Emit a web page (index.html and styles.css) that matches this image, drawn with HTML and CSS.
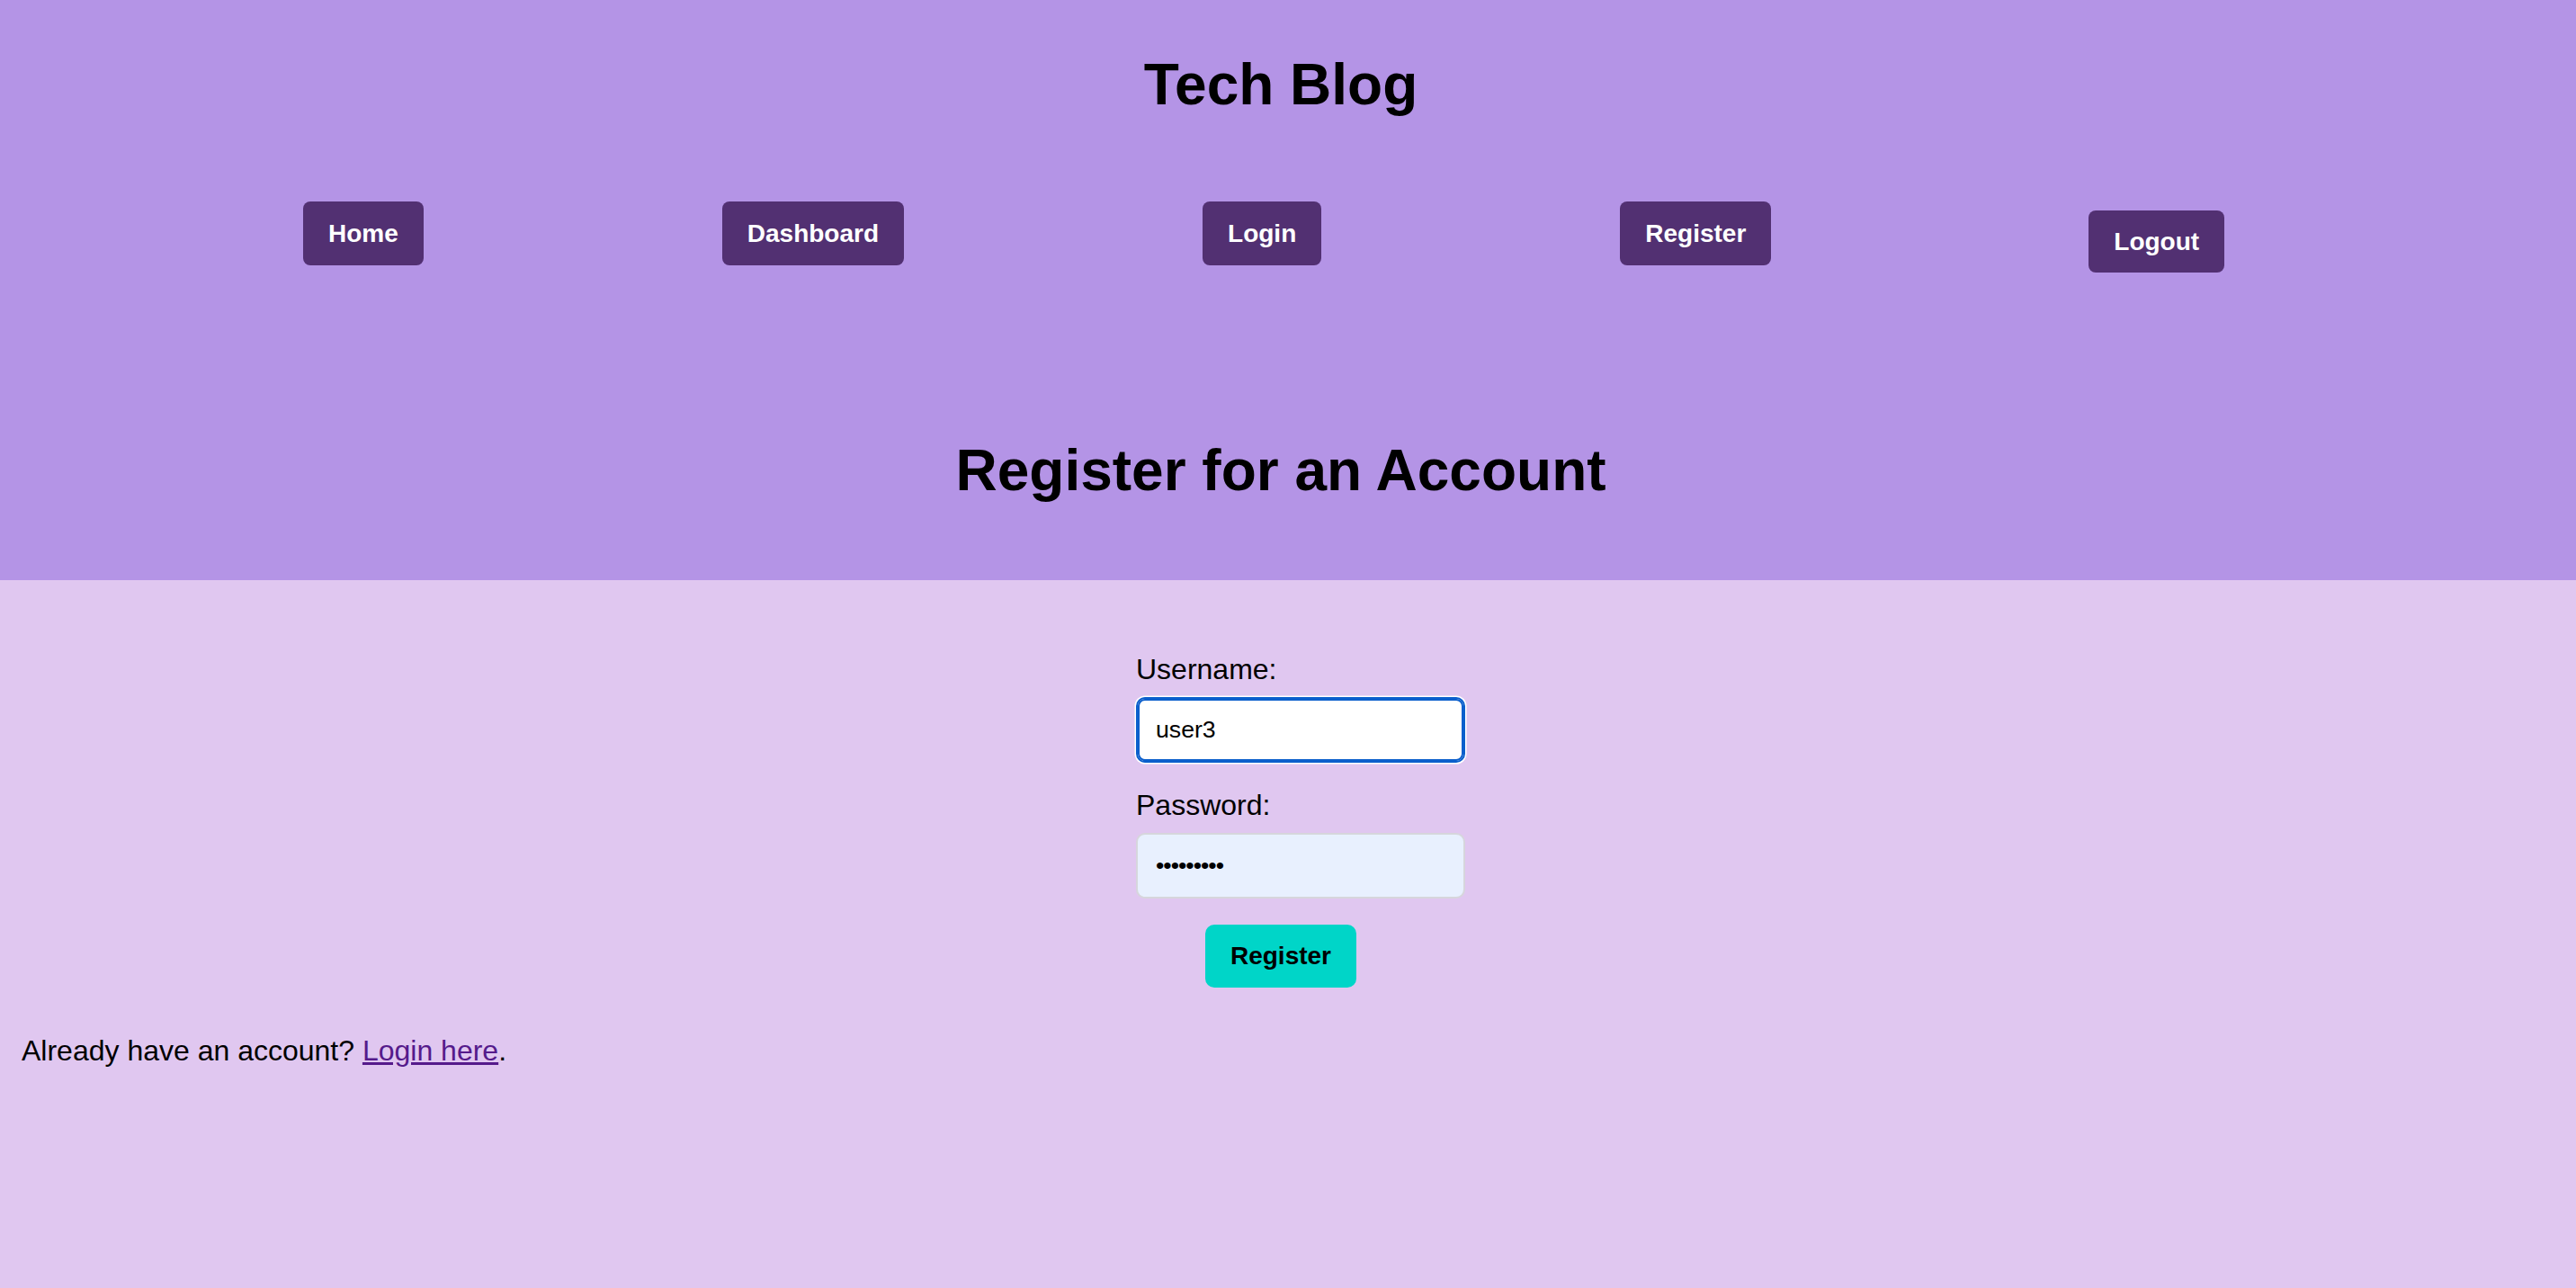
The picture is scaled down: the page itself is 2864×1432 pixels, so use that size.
FILE: index.html
```html
<!DOCTYPE html>
<html lang="en">
<head>
<meta charset="utf-8">
<title>Tech Blog - Register</title>
<link rel="stylesheet" href="styles.css">
</head>
<body>
<header class="site-header">
  <h1 class="site-title">Tech Blog</h1>
  <nav class="site-nav">
    <a class="nav-link" href="#">Home</a>
    <a class="nav-link" href="#">Dashboard</a>
    <a class="nav-link" href="#">Login</a>
    <a class="nav-link" href="#">Register</a>
    <form class="logout-form"><button type="button" class="nav-link logout-btn">Logout</button></form>
  </nav>
  <h2 class="page-title">Register for an Account</h2>
</header>
<main class="content">
  <form class="register-form">
    <div class="field">
      <label class="field-label" for="username">Username:</label>
      <input class="field-input is-focused" id="username" type="text" value="user3">
    </div>
    <div class="field">
      <label class="field-label" for="password">Password:</label>
      <input class="field-input is-autofilled masked" id="password" type="text" value="•••••••••">
    </div>
    <button type="button" class="submit-btn">Register</button>
  </form>
  <p class="login-prompt">Already have an account? <a class="login-link" href="#">Login here</a>.</p>
</main>
</body>
</html>
```

FILE: styles.css
```css
html, body {
  margin: 0;
  padding: 0;
}

body {
  background: #e0c7f0;
  font-family: "Liberation Sans", Arial, sans-serif;
  font-size: 32px;
  color: #000;
  min-height: 1432px;
}

.site-header {
  background: #b494e6;
  padding: 57px 16px 85px 0;
}

.site-title {
  margin: 0;
  font-size: 64px;
  line-height: 74px;
  font-weight: bold;
  text-align: center;
}

.site-nav {
  display: flex;
  align-items: flex-start;
  gap: 332px;
  margin-top: 93px;
  padding-left: 337px;
}

.nav-link {
  display: block;
  padding: 19px 28px;
  font-family: "Liberation Sans", Arial, sans-serif;
  font-size: 28px;
  font-weight: bold;
  line-height: 33px;
  color: #fff;
  background: #523072;
  border: none;
  border-radius: 8px;
  text-decoration: none;
}

.logout-form {
  margin: 10px 0 0 21px;
}

.logout-btn {
  padding: 18px 28px;
  cursor: pointer;
}

.page-title {
  margin: 183px 0 0;
  font-size: 64px;
  line-height: 74px;
  font-weight: bold;
  text-align: center;
}

.content {
  padding: 81px 16px 0 0;
}

.register-form {
  width: 322px;
  margin: 0 auto;
}

.field {
  margin-bottom: 29px;
}

.field-label {
  display: block;
  line-height: 37px;
  margin-bottom: 12px;
}

.field-input {
  display: block;
  box-sizing: content-box;
  width: 100%;
  height: 29px;
  padding: 20px;
  margin: 0;
  font-family: "Liberation Sans", Arial, sans-serif;
  font-size: 26.67px;
  line-height: 29px;
  color: #000;
  background: #fff;
  border: 2px solid #d6d6dc;
  border-radius: 10px;
  outline: none;
}

.field-input.is-focused {
  border-color: #0b5fcc;
  box-shadow: inset 0 0 0 2px #0b5fcc, 0 0 0 1.5px #fff;
}

.field-input.is-autofilled {
  background: #e8f0fe;
}

.field-input.masked {
  letter-spacing: -1px;
}

.field + .submit-btn {
  margin-top: 3px;
}

.submit-btn {
  display: block;
  margin-left: auto;
  margin-right: auto;
  padding: 19px 28px;
  font-family: "Liberation Sans", Arial, sans-serif;
  font-size: 28px;
  font-weight: bold;
  line-height: 32px;
  color: #000;
  background: #00d5c8;
  border: none;
  border-radius: 10px;
  cursor: pointer;
}

.login-prompt {
  margin: 52px 0 0 24px;
  line-height: 37px;
}

.login-link {
  color: #551a8b;
}
```
